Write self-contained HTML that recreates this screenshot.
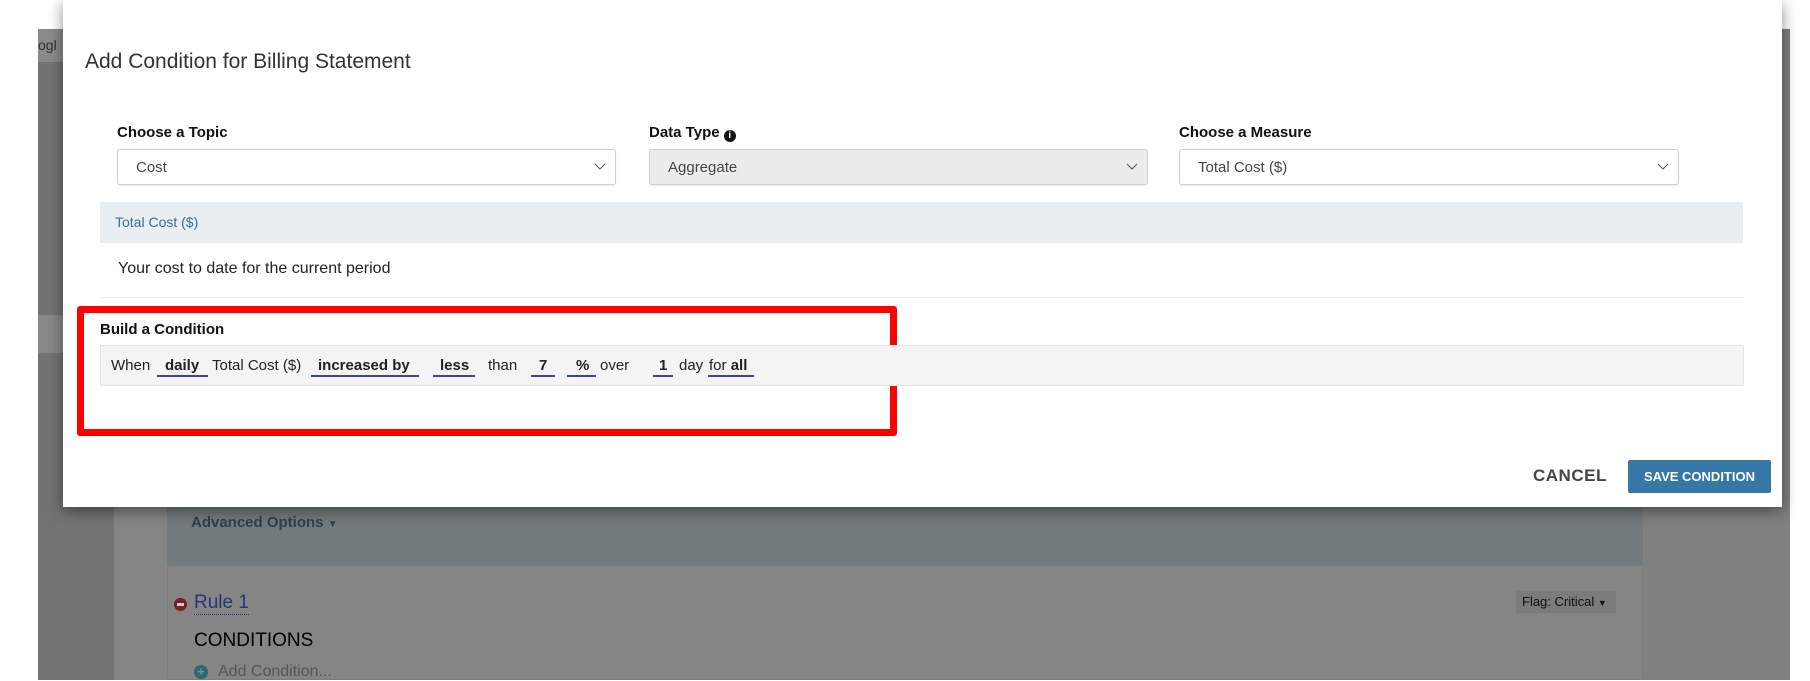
<!DOCTYPE html>
<html><head><meta charset="utf-8"><style>
*{box-sizing:border-box;margin:0;padding:0}
body{width:1810px;height:680px;position:relative;overflow:hidden;background:#fff;font-family:"Liberation Sans",sans-serif}
.a{position:absolute}
.lbl{font-weight:bold;font-size:15px;color:#111}
.sel{height:36px;border:1px solid #d0d0d0;border-radius:3px;background:#fff;font-size:15px;color:#444;padding:9px 18px;box-shadow:0 1px 1px rgba(0,0,0,.08)}
.chev{position:absolute;right:9px;top:13px;width:12px;height:8px}
.w{position:absolute;top:357px;font-size:15px;color:#222;white-space:nowrap}
.u{position:absolute;top:375px;height:2px;background:#3b45a0}
.b{font-weight:bold}
</style></head><body>
<div class="a" style="left:38px;top:29px;width:1752px;height:651px;background:#808080"></div>
<div class="a" style="left:38px;top:29px;width:76px;height:651px;background:#737373"></div>
<div class="a" style="left:38px;top:29px;width:30px;height:33px;background:#8a8a8a;font-size:14px;color:#333;padding-top:8px">ogl</div>
<div class="a" style="left:38px;top:315px;width:76px;height:38px;background:#888"></div>
<div class="a" style="left:114px;top:29px;width:1529px;height:651px;background:#858585"></div>
<div class="a" style="left:167px;top:505px;width:1476px;height:60px;background:#737a7d"></div>
<div class="a" style="left:191px;top:514px;font-size:15px;font-weight:bold;color:#2d4050">Advanced Options <span style="font-size:10px">▼</span></div>
<div class="a" style="left:167px;top:565px;width:1476px;height:115px;background:#858585;border:1px solid #7c7c7c;border-radius:3px"></div>
<div class="a" style="left:174px;top:598px;width:13px;height:13px;border-radius:50%;background:#7a1d25"><div style="position:absolute;left:3px;top:5px;width:7px;height:3px;background:#ccc"></div></div>
<div class="a" style="left:194px;top:592px;font-size:19px;color:#2a3575;border-bottom:1px dotted #2a3575;line-height:22px">Rule 1</div>
<div class="a" style="left:1516px;top:591px;width:100px;height:22px;background:#7b7b7b;font-size:13px;color:#111;padding:3px 6px">Flag: Critical <span style="font-size:9px">▼</span></div>
<div class="a" style="left:194px;top:630px;font-size:19px;color:#000">CONDITIONS</div>
<div class="a" style="left:194px;top:665px;width:14px;height:14px;border-radius:50%;background:#2a6a70;color:#888;font-size:13px;line-height:14px;text-align:center;font-weight:bold">+</div>
<div class="a" style="left:218px;top:663px;font-size:16px;color:#555">Add Condition...</div>
<div class="a" style="left:63px;top:0;width:1719px;height:507px;background:#fff;box-shadow:0 4px 14px rgba(0,0,0,.45)"></div>
<div class="a" style="left:85px;top:50px;font-size:21px;color:#333">Add Condition for Billing Statement</div>
<div class="a lbl" style="left:117px;top:124px">Choose a Topic</div>
<div class="a lbl" style="left:649px;top:124px">Data Type <span style="display:inline-block;width:12px;height:12px;border-radius:50%;background:#111;color:#fff;font-size:10px;line-height:12px;text-align:center;vertical-align:-1px">i</span></div>
<div class="a lbl" style="left:1179px;top:124px">Choose a Measure</div>
<div class="a sel" style="left:117px;top:149px;width:499px">Cost<svg class="chev" viewBox="0 0 12 8"><path d="M1 1l5 5 5-5" fill="none" stroke="#555" stroke-width="1"/></svg></div>
<div class="a sel" style="left:649px;top:149px;width:499px;background:#ececec">Aggregate<svg class="chev" viewBox="0 0 12 8"><path d="M1 1l5 5 5-5" fill="none" stroke="#555" stroke-width="1"/></svg></div>
<div class="a sel" style="left:1179px;top:149px;width:500px">Total Cost ($)<svg class="chev" viewBox="0 0 12 8"><path d="M1 1l5 5 5-5" fill="none" stroke="#555" stroke-width="1"/></svg></div>
<div class="a" style="left:100px;top:202px;width:1643px;height:41px;background:#e8eef1;font-size:14px;color:#3b6e8f;padding:12px 15px">Total Cost ($)</div>
<div class="a" style="left:100px;top:243px;width:1643px;height:55px;border-bottom:1px solid #eee"></div>
<div class="a" style="left:118px;top:260px;font-size:16px;color:#222">Your cost to date for the current period</div>
<div class="a" style="left:77px;top:306px;width:820px;height:130px;border:7px solid #f00;border-radius:3px"></div>
<div class="a" style="left:100px;top:321px;font-size:15px;font-weight:bold;color:#111">Build a Condition</div>
<div class="a" style="left:100px;top:345px;width:1644px;height:41px;background:#f4f4f4;border:1px solid #e4e4e4;border-radius:2px"></div>
<div class="w" style="left:111px">When</div>
<div class="w b" style="left:165px">daily</div><div class="u" style="left:157px;width:51px"></div>
<div class="w" style="left:212px">Total Cost ($)</div>
<div class="w b" style="left:318px">increased by</div><div class="u" style="left:311px;width:108px"></div>
<div class="w b" style="left:440px">less</div><div class="u" style="left:433px;width:42px"></div>
<div class="w" style="left:488px">than</div>
<div class="w b" style="left:539px">7</div><div class="u" style="left:531px;width:24px"></div>
<div class="w b" style="left:576px">%</div><div class="u" style="left:567px;width:29px"></div>
<div class="w" style="left:600px">over</div>
<div class="w b" style="left:659px">1</div><div class="u" style="left:653px;width:20px"></div>
<div class="w" style="left:679px">day</div>
<div class="w" style="left:709px">for <b>all</b></div><div class="u" style="left:708px;width:46px"></div>
<div class="a" style="left:1533px;top:466px;font-size:17px;font-weight:bold;color:#444;letter-spacing:.5px">CANCEL</div>
<div class="a" style="left:1628px;top:460px;width:143px;height:33px;background:#3777a8;border-radius:2px;color:#fff;font-size:13px;font-weight:bold;text-align:center;line-height:33px">SAVE CONDITION</div>
</body></html>
